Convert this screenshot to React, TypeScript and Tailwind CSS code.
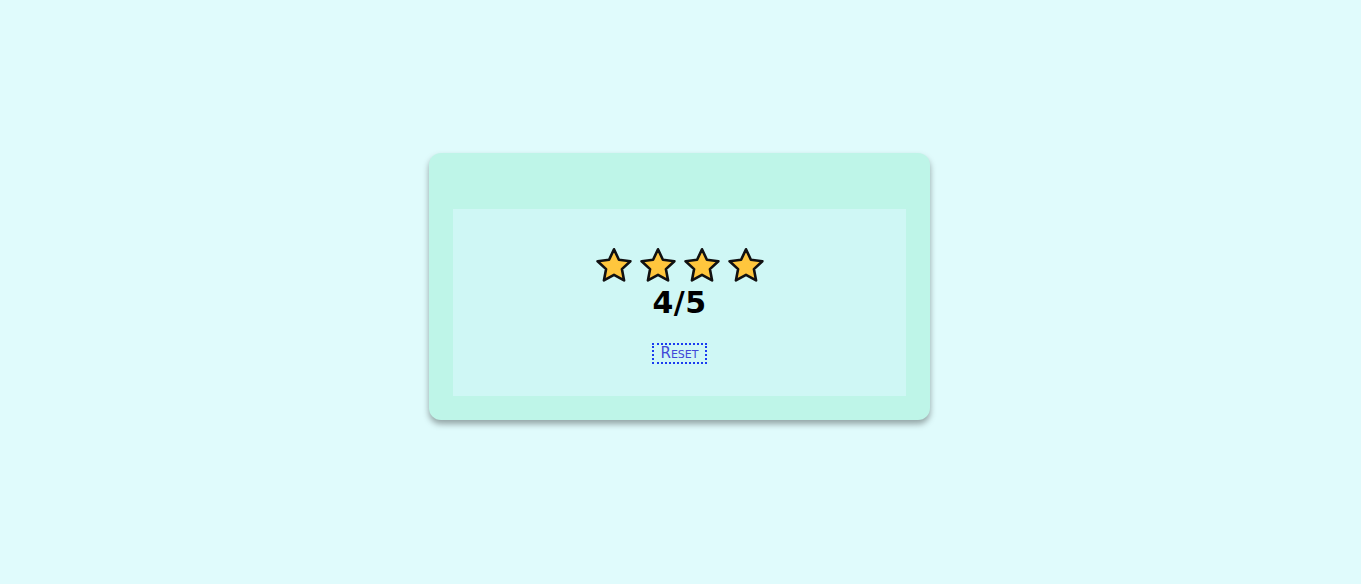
const Star = () => (
  <svg width="40" height="40" viewBox="0 0 40 40" aria-hidden>
    <path
      d="M20 3.3 L24.9 13.8 L36.4 15.2 L27.9 23.1 L30.1 34.4 L20 28.8 L9.9 34.4 L12.1 23.1 L3.6 15.2 L15.1 13.8 Z"
      fill="#ffc63d"
      stroke="#111111"
      strokeWidth="2.6"
      strokeLinejoin="round"
    />
  </svg>
);

const App = () => {
  return (
    <div className="min-h-[584px] w-full bg-[#e0fbfc] flex items-center justify-center pb-[11px] pr-[2px]">
      <div className="w-[501px] h-[267px] rounded-xl bg-[#bef5e8] shadow-[0_4px_6px_rgba(0,0,0,0.35)] px-6 pt-14 pb-6">
        <div className="h-full bg-[#cff7f5] flex flex-col items-center pt-[37px]">
          <div className="flex gap-1">
            <Star />
            <Star />
            <Star />
            <Star />
          </div>
          <p className="font-['DejaVu_Sans',sans-serif] font-bold text-[30px] leading-[34px] tracking-[0.5px] text-black">
            4/5
          </p>
          <button className="mt-[23px] border-2 border-dotted border-[#1a3cf0] px-[6px] h-[21px] flex items-center font-['DejaVu_Sans',sans-serif] text-[15px] [font-variant:small-caps] text-[#4048d8]">
            Reset
          </button>
        </div>
      </div>
    </div>
  );
};

export default App;
